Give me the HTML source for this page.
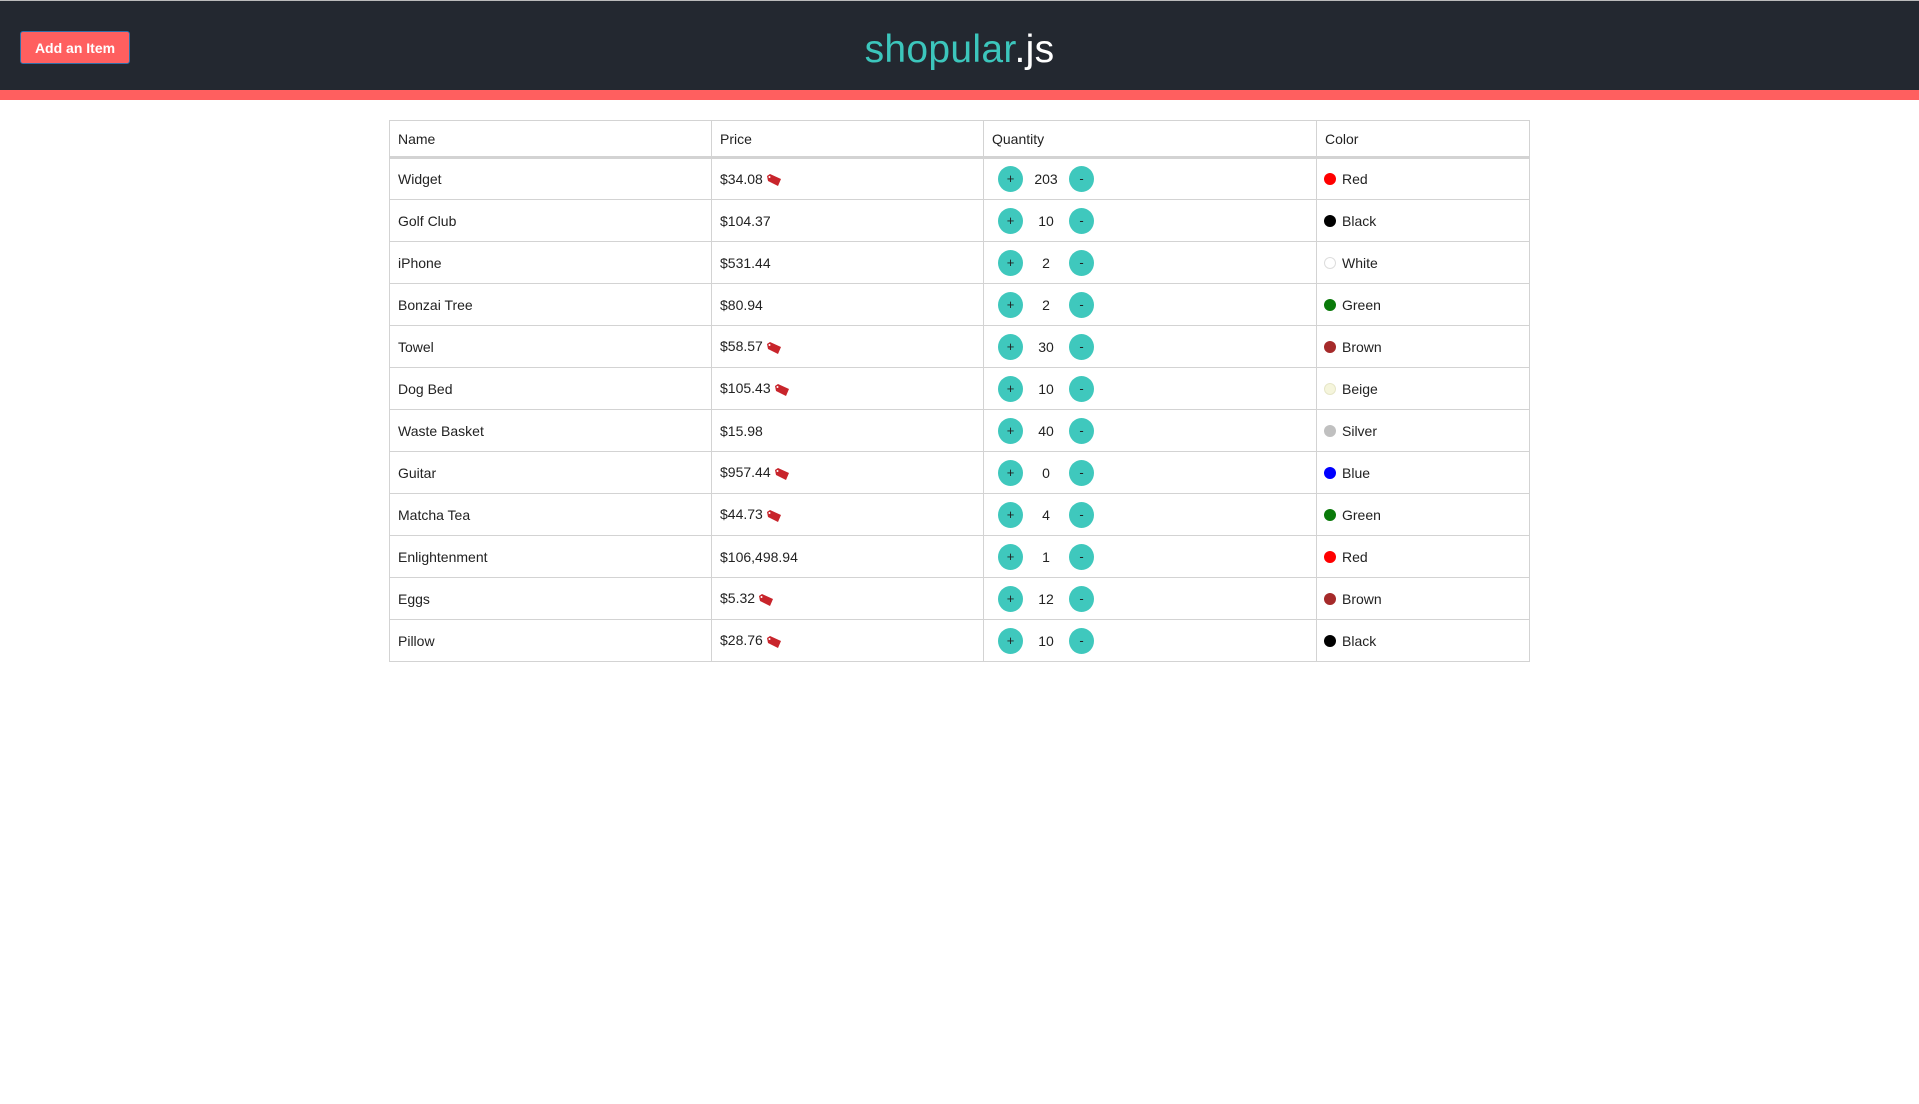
<!DOCTYPE html>
<html><head><meta charset="utf-8"><style>
*{box-sizing:border-box;margin:0;padding:0}
body{width:1919px;height:1104px;background:#fff;font-family:"Liberation Sans",sans-serif;color:#222;position:relative;overflow:hidden}
.top{position:absolute;left:0;top:0;width:1919px;height:1px;background:#bbb}
.hdr{position:absolute;left:0;top:1px;width:1919px;height:89px;background:#232830}
.band{position:absolute;left:0;top:90px;width:1919px;height:10px;background:#ff5f5f}
.btn{position:absolute;left:20px;top:31px;width:110px;height:33px;background:#ff5f5f;border:1px solid #2f6fa8;border-radius:3px;color:#fff;font-weight:bold;font-size:14px;line-height:33px;text-align:center}
.title{position:absolute;left:0;width:1919px;top:27px;text-align:center;font-size:39px;line-height:46px;color:#3cc6bc;letter-spacing:0.3px}
.title span{color:#fff}
table{position:absolute;left:389px;top:120px;border-collapse:collapse;font-size:14px}
td,th{border:1px solid #d3d3d3;height:42px;padding:0 8px;text-align:left;font-weight:normal;vertical-align:middle}
th{height:37px;border-bottom:3px solid #d3d3d3}
.q{display:inline-block;width:25px;height:26px;border-radius:50%;background:#3fc8bd;color:#222;text-align:center;line-height:26px;font-size:13px;vertical-align:middle}
.q:first-child{margin-left:6px}
.n{display:inline-block;width:46px;text-align:center;vertical-align:middle}
.d{display:inline-block;width:12px;height:12px;border-radius:50%;margin-right:5px;position:relative;top:-1px;left:-1px;vertical-align:middle}
svg{vertical-align:middle;margin-left:-2px}
</style></head><body>
<div class="top"></div><div class="hdr"></div><div class="band"></div>
<div class="btn">Add an Item</div>
<div class="title">shopular<span>.js</span></div>
<table>
<tr><th style="width:322px">Name</th><th style="width:272px">Price</th><th style="width:333px">Quantity</th><th style="width:213px">Color</th></tr>
<tr><td>Widget</td><td>$34.08 <svg width="18" height="14" viewBox="0 0 18 14"><path d="M2 3 L5 1 L16 6 L13 13 L3 8 Z" fill="#c8242b"/><circle cx="4.5" cy="4" r="1" fill="#fff"/></svg></td><td><span class="q">+</span><span class="n">203</span><span class="q">-</span></td><td><span class="d" style="background:#f00"></span>Red</td></tr>
<tr><td>Golf Club</td><td>$104.37</td><td><span class="q">+</span><span class="n">10</span><span class="q">-</span></td><td><span class="d" style="background:#000"></span>Black</td></tr>
<tr><td>iPhone</td><td>$531.44</td><td><span class="q">+</span><span class="n">2</span><span class="q">-</span></td><td><span class="d" style="background:#fff;border:1px solid #ddd"></span>White</td></tr>
<tr><td>Bonzai Tree</td><td>$80.94</td><td><span class="q">+</span><span class="n">2</span><span class="q">-</span></td><td><span class="d" style="background:#0a7a0a"></span>Green</td></tr>
<tr><td>Towel</td><td>$58.57 <svg width="18" height="14" viewBox="0 0 18 14"><path d="M2 3 L5 1 L16 6 L13 13 L3 8 Z" fill="#c8242b"/><circle cx="4.5" cy="4" r="1" fill="#fff"/></svg></td><td><span class="q">+</span><span class="n">30</span><span class="q">-</span></td><td><span class="d" style="background:#a52a2a"></span>Brown</td></tr>
<tr><td>Dog Bed</td><td>$105.43 <svg width="18" height="14" viewBox="0 0 18 14"><path d="M2 3 L5 1 L16 6 L13 13 L3 8 Z" fill="#c8242b"/><circle cx="4.5" cy="4" r="1" fill="#fff"/></svg></td><td><span class="q">+</span><span class="n">10</span><span class="q">-</span></td><td><span class="d" style="background:#f5f5dc;border:1px solid #e6e6c8"></span>Beige</td></tr>
<tr><td>Waste Basket</td><td>$15.98</td><td><span class="q">+</span><span class="n">40</span><span class="q">-</span></td><td><span class="d" style="background:#c0c0c0"></span>Silver</td></tr>
<tr><td>Guitar</td><td>$957.44 <svg width="18" height="14" viewBox="0 0 18 14"><path d="M2 3 L5 1 L16 6 L13 13 L3 8 Z" fill="#c8242b"/><circle cx="4.5" cy="4" r="1" fill="#fff"/></svg></td><td><span class="q">+</span><span class="n">0</span><span class="q">-</span></td><td><span class="d" style="background:#00f"></span>Blue</td></tr>
<tr><td>Matcha Tea</td><td>$44.73 <svg width="18" height="14" viewBox="0 0 18 14"><path d="M2 3 L5 1 L16 6 L13 13 L3 8 Z" fill="#c8242b"/><circle cx="4.5" cy="4" r="1" fill="#fff"/></svg></td><td><span class="q">+</span><span class="n">4</span><span class="q">-</span></td><td><span class="d" style="background:#0a7a0a"></span>Green</td></tr>
<tr><td>Enlightenment</td><td>$106,498.94</td><td><span class="q">+</span><span class="n">1</span><span class="q">-</span></td><td><span class="d" style="background:#f00"></span>Red</td></tr>
<tr><td>Eggs</td><td>$5.32 <svg width="18" height="14" viewBox="0 0 18 14"><path d="M2 3 L5 1 L16 6 L13 13 L3 8 Z" fill="#c8242b"/><circle cx="4.5" cy="4" r="1" fill="#fff"/></svg></td><td><span class="q">+</span><span class="n">12</span><span class="q">-</span></td><td><span class="d" style="background:#a52a2a"></span>Brown</td></tr>
<tr><td>Pillow</td><td>$28.76 <svg width="18" height="14" viewBox="0 0 18 14"><path d="M2 3 L5 1 L16 6 L13 13 L3 8 Z" fill="#c8242b"/><circle cx="4.5" cy="4" r="1" fill="#fff"/></svg></td><td><span class="q">+</span><span class="n">10</span><span class="q">-</span></td><td><span class="d" style="background:#000"></span>Black</td></tr>
</table>
</body></html>
